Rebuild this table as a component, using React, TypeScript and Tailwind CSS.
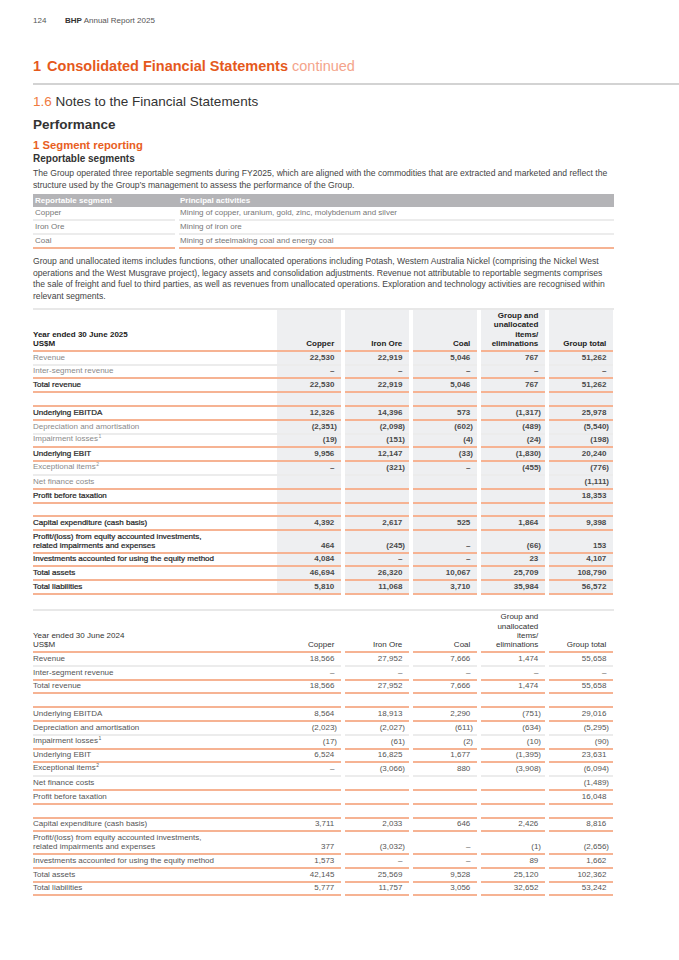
type Line = "o" | "g";
type Row = {
  label: string[];
  sup?: string;
  vals: string[];
  strong?: boolean;
  line: Line;
  double?: boolean;
  empty?: boolean;
};

const e = ["", "", "", "", ""];

const rows2025: Row[] = [
  { label: ["Revenue"], vals: ["22,530", "22,919", "5,046", "767", "51,262"], line: "g" },
  { label: ["Inter-segment revenue"], vals: ["–", "–", "–", "–", "–"], line: "o" },
  { label: ["Total revenue"], vals: ["22,530", "22,919", "5,046", "767", "51,262"], strong: true, line: "o" },
  { label: [""], vals: e, line: "o", empty: true },
  { label: ["Underlying EBITDA"], vals: ["12,326", "14,396", "573", "(1,317)", "25,978"], strong: true, line: "o" },
  { label: ["Depreciation and amortisation"], vals: ["(2,351)", "(2,098)", "(602)", "(489)", "(5,540)"], line: "g" },
  { label: ["Impairment losses"], sup: "1", vals: ["(19)", "(151)", "(4)", "(24)", "(198)"], line: "o" },
  { label: ["Underlying EBIT"], vals: ["9,956", "12,147", "(33)", "(1,830)", "20,240"], strong: true, line: "o" },
  { label: ["Exceptional items"], sup: "2", vals: ["–", "(321)", "–", "(455)", "(776)"], line: "g" },
  { label: ["Net finance costs"], vals: ["", "", "", "", "(1,111)"], line: "o" },
  { label: ["Profit before taxation"], vals: ["", "", "", "", "18,353"], strong: true, line: "o" },
  { label: [""], vals: e, line: "o", empty: true },
  { label: ["Capital expenditure (cash basis)"], vals: ["4,392", "2,617", "525", "1,864", "9,398"], strong: true, line: "o" },
  {
    label: ["Profit/(loss) from equity accounted investments,", "related impairments and expenses"],
    vals: ["464", "(245)", "–", "(66)", "153"],
    strong: true,
    line: "o",
    double: true,
  },
  { label: ["Investments accounted for using the equity method"], vals: ["4,084", "–", "–", "23", "4,107"], strong: true, line: "o" },
  { label: ["Total assets"], vals: ["46,694", "26,320", "10,067", "25,709", "108,790"], strong: true, line: "o" },
  { label: ["Total liabilities"], vals: ["5,810", "11,068", "3,710", "35,984", "56,572"], strong: true, line: "o" },
];

const rows2024: Row[] = [
  { label: ["Revenue"], vals: ["18,566", "27,952", "7,666", "1,474", "55,658"], line: "g" },
  { label: ["Inter-segment revenue"], vals: ["–", "–", "–", "–", "–"], line: "o" },
  { label: ["Total revenue"], vals: ["18,566", "27,952", "7,666", "1,474", "55,658"], line: "o" },
  { label: [""], vals: e, line: "o", empty: true },
  { label: ["Underlying EBITDA"], vals: ["8,564", "18,913", "2,290", "(751)", "29,016"], line: "o" },
  { label: ["Depreciation and amortisation"], vals: ["(2,023)", "(2,027)", "(611)", "(634)", "(5,295)"], line: "g" },
  { label: ["Impairment losses"], sup: "1", vals: ["(17)", "(61)", "(2)", "(10)", "(90)"], line: "o" },
  { label: ["Underlying EBIT"], vals: ["6,524", "16,825", "1,677", "(1,395)", "23,631"], line: "o" },
  { label: ["Exceptional items"], sup: "2", vals: ["–", "(3,066)", "880", "(3,908)", "(6,094)"], line: "g" },
  { label: ["Net finance costs"], vals: ["", "", "", "", "(1,489)"], line: "o" },
  { label: ["Profit before taxation"], vals: ["", "", "", "", "16,048"], line: "o" },
  { label: [""], vals: e, line: "o", empty: true },
  { label: ["Capital expenditure (cash basis)"], vals: ["3,711", "2,033", "646", "2,426", "8,816"], line: "o" },
  {
    label: ["Profit/(loss) from equity accounted investments,", "related impairments and expenses"],
    vals: ["377", "(3,032)", "–", "(1)", "(2,656)"],
    line: "o",
    double: true,
  },
  { label: ["Investments accounted for using the equity method"], vals: ["1,573", "–", "–", "89", "1,662"], line: "o" },
  { label: ["Total assets"], vals: ["42,145", "25,569", "9,528", "25,120", "102,362"], line: "o" },
  { label: ["Total liabilities"], vals: ["5,777", "11,757", "3,056", "32,652", "53,242"], line: "o" },
];

const heads = [["Copper"], ["Iron Ore"], ["Coal"], ["Group and", "unallocated", "items/", "eliminations"], ["Group total"]];

function SegmentTable({ year, rows, current }: { year: string; rows: Row[]; current: boolean }) {
  const shade = current ? "bg-[#eeeff1]" : "";
  return (
    <div className="text-[8px]">
      <div className="h-[2px] bg-[#e8e8e8]" />
      <div className={`flex h-[42px] leading-[9.3px] ${current ? "font-bold text-[#222]" : "text-[#333]"}`}>
        <div className="w-[244px] flex flex-col justify-end pb-[1.5px] border-b-2 border-[#f6b393]">
          <span>Year ended 30 June {year}</span>
          <span>US$M</span>
        </div>
        {heads.map((h, i) => (
          <div
            key={i}
            className={`w-[64px] flex flex-col justify-end items-end text-right pr-[6.7px] pb-[1.5px] border-b-2 border-[#f6b393] ${shade} ${i > 0 ? "ml-[4px]" : ""}`}
          >
            {h.map((t) => (
              <span key={t}>{t}</span>
            ))}
          </div>
        ))}
      </div>
      {rows.map((r, ri) => {
        const line = r.line === "o" ? "border-b-2 border-[#f6b393]" : "border-b-2 border-[#ececec]";
        const h = r.double ? "h-[22.5px]" : "h-[13.8px]";
        const labelColor = current
          ? r.strong
            ? "text-[#262626] [-webkit-text-stroke:0.22px_#262626]"
            : "text-[#8a8a8a]"
          : "text-[#555]";
        return (
          <div key={ri} className={`flex ${h} leading-[9px]`}>
            <div className={`w-[244px] flex flex-col justify-end pb-[2px] ${line} ${labelColor}`}>
              {r.label.map((l, li) => (
                <span key={li}>
                  {l}
                  {r.sup && li === r.label.length - 1 ? (
                    <span className="relative -top-[3px] ml-[0.5px] text-[5px]">{r.sup}</span>
                  ) : null}
                </span>
              ))}
            </div>
            {r.vals.map((v, i) => (
              <div
                key={i}
                className={`w-[64px] flex items-end justify-end pr-[4px] pb-[2px] ${line} ${shade} ${i > 0 ? "ml-[4px]" : ""} ${current ? "font-bold text-[#4a4a4a]" : "text-[#555]"}`}
              >
                <span>
                  {v}
                  {v && !v.endsWith(")") ? <span className="invisible">)</span> : null}
                </span>
              </div>
            ))}
          </div>
        );
      })}
    </div>
  );
}

const segs = [
  ["Copper", "Mining of copper, uranium, gold, zinc, molybdenum and silver"],
  ["Iron Ore", "Mining of iron ore"],
  ["Coal", "Mining of steelmaking coal and energy coal"],
];

export default function App() {
  return (
    <div className="min-h-[960px] bg-white pl-[33px] pb-[40px] font-['Liberation_Sans',Arial,sans-serif] text-[#333]">
      <div className="flex pt-[16px] text-[8px] leading-[10px] text-[#555]">
        <span className="w-[32px]">124</span>
        <span>
          <b className="text-[#333]">BHP</b> Annual Report 2025
        </span>
      </div>

      <h1 className="mt-[31px] text-[14.5px] leading-[18px] font-bold text-[#e5591c]">
        1<span className="ml-[6px]">Consolidated Financial Statements</span>{" "}
        <span className="font-normal text-[#f4a48b]">continued</span>
      </h1>
      <div className="mt-[8px] h-[2px] bg-[#d3d3d3]" />

      <div className="w-[581px]">
        <h2 className="mt-[9px] text-[13.5px] leading-[16px] text-[#333]">
          <span className="text-[#ef7a3f]">1.6</span> Notes to the Financial Statements
        </h2>
        <h3 className="mt-[7px] text-[13.5px] leading-[16px] font-bold text-[#333]">Performance</h3>
        <h4 className="mt-[5.5px] text-[11.3px] leading-[13px] font-bold text-[#e8601e]">1 Segment reporting</h4>
        <h5 className="mt-[1.5px] text-[10px] leading-[12px] font-bold text-[#333]">Reportable segments</h5>
        <p className="mt-[2px] w-[620px] text-[8.6px] leading-[12px] text-[#444]">
          The Group operated three reportable segments during FY2025, which are aligned with the commodities that are extracted and marketed and reflect the
          <br />
          structure used by the Group’s management to assess the performance of the Group.
        </p>

        <div className="mt-[3px] text-[8px]">
          <div className="flex h-[13px] items-center bg-[#b4b4b7] font-bold text-white">
            <span className="w-[146px] pl-[2px]">Reportable segment</span>
            <span className="pl-[1px]">Principal activities</span>
          </div>
          {segs.map(([a, b], i) => (
            <div key={a} className="flex h-[14px] text-[#777]">
              <div className={`w-[142px] flex items-center pl-[2px] border-b-2 ${i === 2 ? "border-[#f6b393]" : "border-[#ececec]"}`}>{a}</div>
              <div className={`ml-[4px] flex-1 flex items-center pl-[1px] border-b-2 ${i === 2 ? "border-[#f6b393]" : "border-[#ececec]"}`}>{b}</div>
            </div>
          ))}
        </div>

        <p className="mt-[7px] w-[620px] text-[8.6px] leading-[11.7px] text-[#444]">
          Group and unallocated items includes functions, other unallocated operations including Potash, Western Australia Nickel (comprising the Nickel West
          <br />
          operations and the West Musgrave project), legacy assets and consolidation adjustments. Revenue not attributable to reportable segments comprises
          <br />
          the sale of freight and fuel to third parties, as well as revenues from unallocated operations. Exploration and technology activities are recognised within
          <br />
          relevant segments.
        </p>

        <div className="mt-[5px]">
          <SegmentTable year="2025" rows={rows2025} current />
        </div>
        <div className="mt-[14px]">
          <SegmentTable year="2024" rows={rows2024} current={false} />
        </div>
      </div>
    </div>
  );
}
